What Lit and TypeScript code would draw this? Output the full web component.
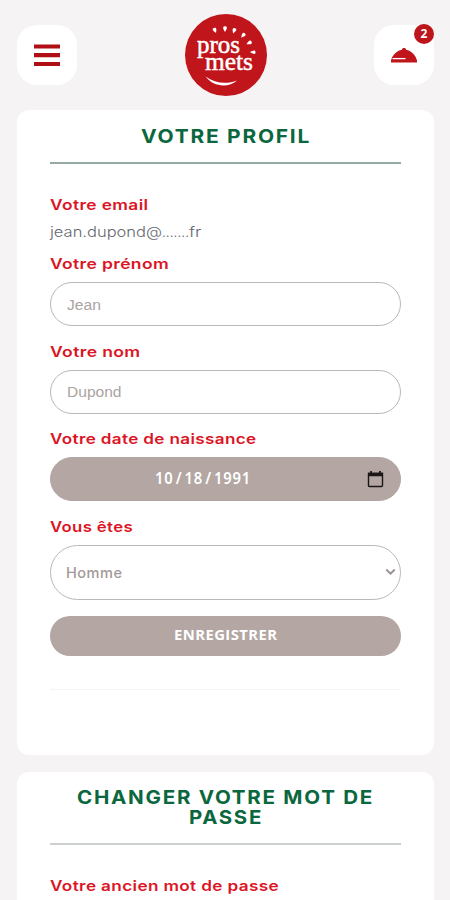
import { LitElement, html, css, svg } from "lit";
import { customElement, property } from "lit/decorators.js";

@customElement("brand-logo")
class BrandLogo extends LitElement {
  static styles = css`
    :host { display: block; width: 84px; height: 84px; }
    svg { display: block; }
    .word { font: 400 25px "Liberation Serif", serif; fill: #fff; stroke: #fff; stroke-width: 0.5; }
  `;
  render() {
    const rays = [
      [31, 17.5, -22], [41, 16.2, 0], [50, 17.8, 20], [59, 22.5, 40], [65, 30, 65], [68.7, 39.2, 92],
    ];
    return html`<svg width="84" height="84" viewBox="0 0 84 84">
      <circle cx="42" cy="42" r="41" fill="#c0151b" />
      ${rays.map(([x, y, a]) => svg`<path fill="#fff" transform="translate(${x} ${y}) rotate(${a})" d="M0 2.8C-1 .8-2.1-.6-1.8-1.8C-1.4-3.2 1.4-3.2 1.8-1.8C2.1-.6 1 .8 0 2.8Z" />`)}
      <text class="word" x="13" y="40" textLength="43" lengthAdjust="spacingAndGlyphs">pros</text>
      <text class="word" x="21" y="56.5" textLength="48" lengthAdjust="spacingAndGlyphs">mets</text>
      <path fill="#fff" d="M21.500 63.500C31 70.500 43 71.500 53 67.500C44 75.500 29 73.500 21.500 63.500Z" />
    </svg>`;
  }
}

/* One line of text stretched to a given advance width. */
@customElement("wide-text")
class WideText extends LitElement {
  @property() text = "";
  @property({ type: Number }) width = 100;
  static styles = css`
    :host { display: block; height: 20px; }
    svg { display: block; overflow: visible; }
    text { fill: currentColor; }
  `;
  render() {
    return html`<svg width=${this.width} height="20"><text x="0" y="15.200" textLength=${this.width} lengthAdjust="spacingAndGlyphs">${this.text}</text></svg>`;
  }
}

@customElement("panel-card")
class PanelCard extends LitElement {
  @property({ attribute: false }) lines: [string, number][] = [];
  static styles = css`
    :host { display: block; box-sizing: border-box; margin: 0 16px 0 17px; padding: 18px 33px 0; background: #fff; border-radius: 12px; }
    h2 { margin: 0 0 14px; font: 650 19.3px/20px Inter, sans-serif; letter-spacing: 1.6px; color: #0b673d; display: flex; flex-direction: column; align-items: center; }
    .rule { height: 2px; background: #94aaa3; }
    :host([pale]) .rule { background: #ccd0cf; }
    :host([pale]) h2 { margin-top: -1px; }
  `;
  render() {
    return html`<h2>${this.lines.map(([t, w]) => html`<wide-text text=${t} width=${w}></wide-text>`)}</h2>
      <div class="rule"></div><slot></slot>`;
  }
}

@customElement("app-root")
class AppRoot extends LitElement {
  static styles = css`
    :host { display: block; height: 900px; overflow: hidden; background: #f5f3f4; font-family: Inter, sans-serif; }
    * { box-sizing: border-box; }
    header { height: 110px; display: flex; justify-content: space-between; align-items: flex-start; padding: 12.500px 16px 0 16.500px; }
    .tile { width: 60px; height: 60px; border-radius: 20px; background: #fff; display: flex; align-items: center; justify-content: center; margin-top: 12px; position: relative; }
    .badge { position: absolute; right: 0; top: -1px; width: 20px; height: 20px; border-radius: 50%; background: #bc151c; color: #fff; font: 700 12px/20px "Open Sans", sans-serif; text-align: center; }
    brand-logo { margin-left: 1px; }
    .profile { height: 645px; margin-bottom: 17px; }
    .password { height: 145px; }
    .label { font-size: 14.500px; font-weight: 600; letter-spacing: 0.3px; color: #db1525; }
    .first { margin-top: 31px; }
    .email { height: 20px; margin: 7px 0 12px; font-size: 14.500px; font-weight: 300; color: #666970; display: flex; }
    .field { height: 44px; margin: 8px 0 15.500px; border: 1px solid #bcb8b8; border-radius: 22px; padding: 1px 16px 0; display: flex; align-items: center; color: #aaa3a2; font: 400 15.500px "Liberation Sans", sans-serif; }
    .date { background: #b3a6a3; border-color: #b3a6a3; color: #fff; font: 600 15.500px "Noto Sans", sans-serif; letter-spacing: 0.8px; word-spacing: -2.500px; justify-content: space-between; padding: 0 16px 0 104px; }
    .date wide-text { margin-top: -1px; }
    .select { height: 55px; border-radius: 27.500px; margin: 8px 0 16px; padding: 0 4px 0 15px; justify-content: space-between; font: 500 14.500px Inter, sans-serif; letter-spacing: 0.5px; color: #a39996; }
    .select wide-text { margin-top: 1px; }
    .save { height: 40px; border-radius: 20px; background: #b3a6a3; color: #fff; display: flex; align-items: center; justify-content: center; font: 700 13.500px "Open Sans", sans-serif; letter-spacing: 0.4px; }
    .save wide-text { margin-top: -1px; }
    .end { height: 1px; margin-top: 33px; background: #f5f4f4; }
  `;
  render() {
    return html`
      <header>
        <div class="tile">
          <svg width="28" height="24" viewBox="0 0 28 24"><path d="M1 3.500H27M1 12.200H27M1 21H27" stroke="#b10f16" stroke-width="4.200" /></svg>
        </div>
        <brand-logo></brand-logo>
        <div class="tile">
          <svg width="26" height="18" viewBox="0 0 26 18">
            <path fill="#c0151b" d="M0 16.500V14.500C1.500 9 5.500 4.800 11 3.800C10.600 1.300 15.400 1.300 15 3.800C20.500 4.800 24.500 9 26 14.500V16.500Z" />
            <path d="M1.500 12.600H14.500" stroke="#fff" stroke-width="1.300" />
          </svg>
          <span class="badge">2</span>
        </div>
      </header>
      <panel-card class="profile" .lines=${[["VOTRE PROFIL", 170]]}>
        <wide-text class="label first" text="Votre email" width="98.500"></wide-text>
        <div class="email">
          <wide-text text="jean.dupond@" width="112"></wide-text><wide-text text="......." width="27"></wide-text><wide-text text="fr" width="12.500"></wide-text>
        </div>
        <wide-text class="label" text="Votre prénom" width="119"></wide-text>
        <div class="field"><wide-text text="Jean" width="34"></wide-text></div>
        <wide-text class="label" text="Votre nom" width="90.500"></wide-text>
        <div class="field"><wide-text text="Dupond" width="54.500"></wide-text></div>
        <wide-text class="label" text="Votre date de naissance" width="206.500"></wide-text>
        <div class="field date">
          <wide-text text="10 / 18 / 1991" width="96"></wide-text>
          <svg width="17" height="18" viewBox="0 0 17 18"><path d="M1.500 3.500H15.500V15.500Q15.500 16.500 14.500 16.500H2.500Q1.500 16.500 1.500 15.500Z" fill="none" stroke="#1b1718" stroke-width="1.400" /><path d="M1 2.700H16V6.200H1ZM3.200 1H5V3H3.200ZM12 1H13.800V3H12Z" fill="#1b1718" /></svg>
        </div>
        <wide-text class="label" text="Vous êtes" width="83"></wide-text>
        <div class="field select"><wide-text text="Homme" width="56.500"></wide-text>
          <svg width="11" height="8" viewBox="0 0 11 8"><path d="M1.300 1.500L5.500 5.700L9.700 1.500" fill="none" stroke="#999090" stroke-width="1.800" /></svg>
        </div>
        <div class="save"><wide-text text="ENREGISTRER" width="103.500"></wide-text></div>
        <div class="end"></div>
      </panel-card>
      <panel-card class="password" pale .lines=${[["CHANGER VOTRE MOT DE", 297], ["PASSE", 74]]}>
        <wide-text class="label first" text="Votre ancien mot de passe" width="229"></wide-text>
      </panel-card>
    `;
  }
}
